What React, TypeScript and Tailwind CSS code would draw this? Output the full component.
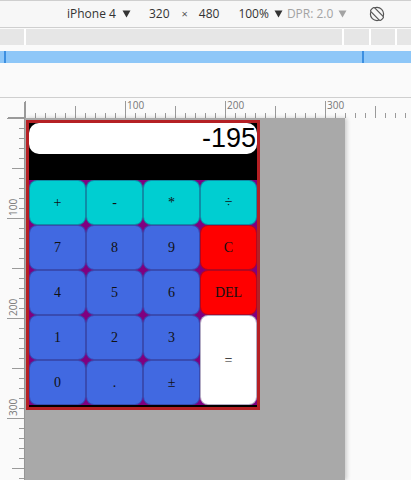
import React from "react";

const topTicks = Array.from({ length: 39 }, (_, i) => i * 10);
const leftTicks = Array.from({ length: 37 }, (_, i) => i * 10);

function TopRuler() {
  return (
    <svg width={386} height={20} className="block">
      {topTicks.map((x) => {
        const y1 = x % 100 === 0 ? 3 : x % 50 === 0 ? 8 : 15;
        return <line key={x} x1={x + 0.5} x2={x + 0.5} y1={y1} y2={20} stroke="#9a9a9a" strokeWidth={1} />;
      })}
      {[100, 200, 300].map((x) => (
        <text key={x} x={x + 2} y={11} fontSize={10} fill="#777" fontFamily="'Open Sans', sans-serif">
          {x}
        </text>
      ))}
    </svg>
  );
}

function LeftRuler() {
  return (
    <svg width={25} height={382} className="block">
      <line x1={24.5} x2={24.5} y1={4} y2={382} stroke="#9a9a9a" strokeWidth={1} />
      <line x1={8} x2={24} y1={19.5} y2={19.5} stroke="#9a9a9a" strokeWidth={1} />
      {leftTicks.map((y) => {
        const x1 = y % 100 === 0 ? 7 : y % 50 === 0 ? 12 : 19;
        return <line key={y} x1={x1} x2={24} y1={20 + y + 0.5} y2={20 + y + 0.5} stroke="#9a9a9a" strokeWidth={1} />;
      })}
      {[100, 200, 300].map((y) => (
        <text
          key={y}
          transform={`translate(16.5, ${20 + y - 2}) rotate(-90)`}
          fontSize={10}
          fill="#777"
          fontFamily="'Open Sans', sans-serif"
        >
          {y}
        </text>
      ))}
    </svg>
  );
}

function Tri({ color }: { color: string }) {
  return (
    <svg width={9} height={8} viewBox="0 0 9 8" className="block">
      <path d="M0.5 0.5 H8.5 L4.5 7.5 Z" fill={color} />
    </svg>
  );
}

function RotateIcon() {
  return (
    <svg width={16} height={16} viewBox="0 0 16 16" className="block">
      <circle cx={8} cy={8} r={6.6} fill="none" stroke="#555" strokeWidth={1.2} />
      <rect x={5.3} y={0.8} width={5.4} height={14.4} rx={1.6} fill="#f7f7f7" stroke="#555" strokeWidth={1.2} transform="rotate(-45 8 8)" />
    </svg>
  );
}

type Btn = { label: string; bg: string; span?: boolean };

const buttons: Btn[] = [
  { label: "+", bg: "bg-[#00ced1]" },
  { label: "-", bg: "bg-[#00ced1]" },
  { label: "*", bg: "bg-[#00ced1]" },
  { label: "÷", bg: "bg-[#00ced1]" },
  { label: "7", bg: "bg-[#4169e1]" },
  { label: "8", bg: "bg-[#4169e1]" },
  { label: "9", bg: "bg-[#4169e1]" },
  { label: "C", bg: "bg-[#ff0000]" },
  { label: "4", bg: "bg-[#4169e1]" },
  { label: "5", bg: "bg-[#4169e1]" },
  { label: "6", bg: "bg-[#4169e1]" },
  { label: "DEL", bg: "bg-[#ff0000]" },
  { label: "1", bg: "bg-[#4169e1]" },
  { label: "2", bg: "bg-[#4169e1]" },
  { label: "3", bg: "bg-[#4169e1]" },
  { label: "=", bg: "bg-white", span: true },
  { label: "0", bg: "bg-[#4169e1]" },
  { label: ".", bg: "bg-[#4169e1]" },
  { label: "±", bg: "bg-[#4169e1]" },
];

function Calculator() {
  return (
    <div className="ml-[1px] mt-[2px] w-[234px] border-[3px] border-[#b52024] bg-black">
      <div className="h-[31px] rounded-[10px] bg-white pr-[1px] text-right text-[27px] leading-[31px] text-black [font-family:'Liberation_Sans',Arial,sans-serif]">
        -195
      </div>
      <div className="h-[26px]" />
      <div className="grid grid-cols-4 auto-rows-[45px] bg-[#800080] [font-family:'Liberation_Serif','Times_New_Roman',serif]">
        {buttons.map((b, i) => (
          <div
            key={i}
            className={`${b.bg} ${b.span ? "row-span-2" : ""} flex items-center justify-center rounded-[8px] border border-[rgba(40,20,90,0.35)] text-[14px] text-[#111]`}
          >
            {b.label}
          </div>
        ))}
      </div>
      <div className="h-[2px]" />
    </div>
  );
}

export default function App() {
  return (
    <div className="w-[411px] h-[480px] overflow-hidden bg-[#fafafa] [font-family:'Open_Sans','Noto_Sans',sans-serif]">
      {/* toolbar */}
      <div className="flex h-[28px] items-center border-t border-b border-[#cfcfcf] bg-[#f7f7f7] text-[12px] text-[#333]">
        <span className="ml-[67px]">iPhone 4</span>
        <span className="ml-[6px]">
          <Tri color="#333" />
        </span>
        <span className="ml-[18px]">320</span>
        <span className="ml-[12px] text-[11px] text-[#555]">×</span>
        <span className="ml-[11px]">480</span>
        <span className="ml-[19px]">100%</span>
        <span className="ml-[5px]">
          <Tri color="#333" />
        </span>
        <span className="ml-[4px] text-[#a3a3a3]">DPR: 2.0</span>
        <span className="ml-[5px]">
          <Tri color="#a3a3a3" />
        </span>
        <span className="ml-[22px]">
          <RotateIcon />
        </span>
      </div>
      {/* media query segments */}
      <div className="mt-[1px] flex h-[16px] gap-[2px] bg-white">
        <div className="w-[24px] bg-[#e6e6e6]" />
        <div className="w-[316px] bg-[#e6e6e6]" />
        <div className="w-[25px] bg-[#e6e6e6]" />
        <div className="w-[24px] bg-[#e6e6e6]" />
        <div className="flex-1 bg-[#e6e6e6]" />
      </div>
      {/* blue bar */}
      <div className="mt-[6px] flex h-[12px] bg-[#8ec7f8]">
        <div className="w-[4px]" />
        <div className="w-[2px] bg-[#3d8fe0]" />
        <div className="w-[356px]" />
        <div className="w-[2px] bg-[#3d8fe0]" />
      </div>
      <div className="h-[34px]" />
      {/* ruler area */}
      <div className="flex border-t border-[#cfcfcf]">
        <LeftRuler />
        <div className="flex flex-col">
          <TopRuler />
          <div className="flex">
            <div className="h-[362px] w-[320px] bg-[#a9a9a9] shadow-[2px_0_4px_rgba(0,0,0,0.18)]">
              <Calculator />
            </div>
          </div>
        </div>
      </div>
    </div>
  );
}
